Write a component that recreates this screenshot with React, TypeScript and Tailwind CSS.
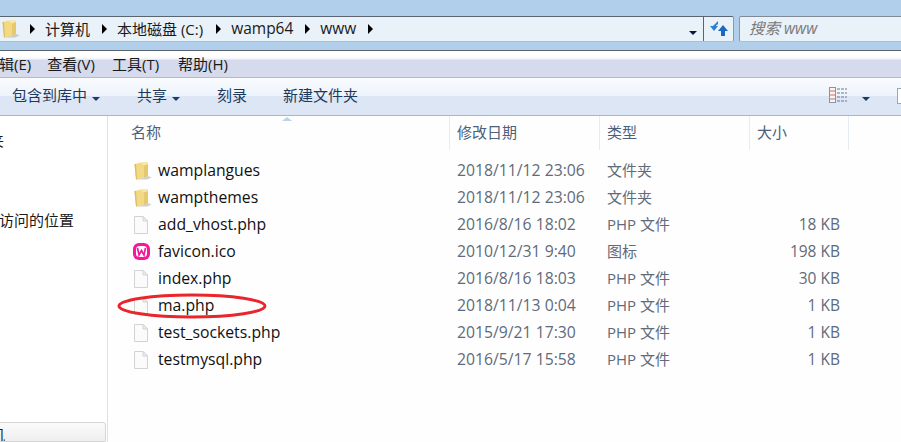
const cjk = "font-['Open_Sans','Noto_Sans_CJK_SC',sans-serif]";

const files = [
  { name: "wamplangues", date: "2018/11/12 23:06", type: "文件夹", size: "", icon: "folder" },
  { name: "wampthemes", date: "2018/11/12 23:06", type: "文件夹", size: "", icon: "folder" },
  { name: "add_vhost.php", date: "2016/8/16 18:02", type: "PHP 文件", size: "18 KB", icon: "file" },
  { name: "favicon.ico", date: "2010/12/31 9:40", type: "图标", size: "198 KB", icon: "wamp" },
  { name: "index.php", date: "2016/8/16 18:03", type: "PHP 文件", size: "30 KB", icon: "file" },
  { name: "ma.php", date: "2018/11/13 0:04", type: "PHP 文件", size: "1 KB", icon: "file" },
  { name: "test_sockets.php", date: "2015/9/21 17:30", type: "PHP 文件", size: "1 KB", icon: "file" },
  { name: "testmysql.php", date: "2016/5/17 15:58", type: "PHP 文件", size: "1 KB", icon: "file" },
];

function FolderIcon({ className = "" }: { className?: string }) {
  return (
    <svg width="20" height="20" viewBox="0 0 20 20" className={className}>
      <path d="M4 2 L10 1 H15 V15 H4 Z" fill="#f6e9ae" />
      <path d="M1.5 3 L8 2 L11 4.5 V17 L3 18.5 Z" fill="#f2da84" />
      <path d="M1.5 3 L3 18.5 L4 18.3 L3 3 Z" fill="#dcbb5e" />
      <path d="M11 4.5 L15 3 V15 L11 17 Z" fill="#e6c96c" />
      <path d="M3 18.5 L11 17 L15 15 L18.5 16.5 L14 18.5 Z" fill="#b5b5b5" opacity="0.65" />
    </svg>
  );
}

function FileIcon() {
  return (
    <svg width="18" height="20" viewBox="0 0 18 20">
      <path d="M2.5 1.5 H11 L15.5 6 V18.5 H2.5 Z" fill="#fbfbfb" stroke="#d3d3d3" />
      <path d="M11 1.5 V6 H15.5 Z" fill="#eeeeee" stroke="#d3d3d3" />
    </svg>
  );
}

function WampIcon() {
  return (
    <svg width="19" height="19" viewBox="0 0 19 19">
      <rect x="1" y="1" width="17" height="17" rx="6" fill="#f5189b" />
      <rect x="4" y="4" width="11" height="11" rx="3.5" fill="#ffffff" />
      <path d="M5.5 6 L7 13 L9.5 8.5 L12 13 L13.5 6" fill="none" stroke="#f5189b" strokeWidth="1.7" />
    </svg>
  );
}

function Caret({ color = "#1f3a68" }: { color?: string }) {
  return <span className="inline-block h-0 w-0 border-x-[4px] border-t-[4px] border-x-transparent" style={{ borderTopColor: color }} />;
}

function Crumb({ className = "" }: { className?: string }) {
  return <span className={`inline-block h-0 w-0 border-y-[5px] border-l-[5px] border-y-transparent border-l-black ${className}`} />;
}

export default function App() {
  return (
    <div className={`flex h-[442px] w-[901px] flex-col overflow-hidden bg-white text-[15px] ${cjk}`}>
      {/* window chrome */}
      <div className="h-4 bg-[#b1cfeb]" />
      <div className="flex h-[26px] bg-[#b1cfeb]">
        <div className="flex flex-1 items-center rounded-r-[2px] border-y border-r border-t-[#5a6470] border-r-[#8f98a3] border-b-[#b4bcc4] bg-[#e9f1f9] text-[#1a1a1a]">
          <FolderIcon className="ml-[1px]" />
          <div className="flex items-center whitespace-nowrap">
            <Crumb className="ml-[9px]" />
            <span className="ml-[10px]">计算机</span>
            <Crumb className="ml-[12px]" />
            <span className="ml-[10px]">本地磁盘 (C:)</span>
            <Crumb className="ml-[13px]" />
            <span className="ml-[10px] text-[15.5px]">wamp64</span>
            <Crumb className="ml-[12px]" />
            <span className="ml-[10px] text-[15.5px]">www</span>
            <Crumb className="ml-[12px]" />
          </div>
          <div className="ml-auto mr-[6px]"><Caret color="#0a1440" /></div>
          <div className="flex h-full w-[30px] items-center justify-center border-l border-[#5a6470]">
            <svg width="20" height="18" viewBox="0 0 20 18">
              <path d="M9 1 L4 6 H1 L5 11 L9 6 H7 C7 5 8 4.5 9 4.5 Z" fill="#2f7fd0" />
              <path d="M14 5 L19 11 H16 V16 H12 V11 H9 Z" fill="#1c69be" />
            </svg>
          </div>
        </div>
        <div className="ml-[5px] flex w-[162px] items-center rounded-l-[2px] border-y border-l border-t-[#7f8a96] border-l-[#8f98a3] border-b-[#b4bcc4] bg-[#e9f1f9] pl-[9px] text-[15.5px] italic text-[#7a7a7a]">
          搜索 www
        </div>
      </div>
      <div className="h-2 bg-[#b1cfeb]" />

      {/* menu bar */}
      <div className="flex h-[27px] items-center border-t border-[#5a6470] bg-gradient-to-b from-white from-20% via-[#f4f6fb] via-30% to-[#d5daec] to-35% text-[15px] text-[#1a1a1a]">
        <span className="-ml-[16px] whitespace-nowrap">编辑(E)</span>
        <span className="ml-[16px]">查看(V)</span>
        <span className="ml-[17px]">工具(T)</span>
        <span className="ml-[19px]">帮助(H)</span>
      </div>

      {/* toolbar */}
      <div className="flex h-[39px] items-center border-y border-t-[#b3b9d3] border-b-[#a9b4cd] bg-gradient-to-b from-[#fafcfe] from-0% via-[#ecf3fb] via-50% to-[#dce6f4] to-50% pb-[2px] text-[15px] text-[#1e395b]">
        <span className="ml-3">包含到库中</span>
        <span className="ml-[5px]"><Caret /></span>
        <span className="ml-[37px]">共享</span>
        <span className="ml-[5px]"><Caret /></span>
        <span className="ml-[37px]">刻录</span>
        <span className="ml-[36px]">新建文件夹</span>
        <div className="ml-auto flex items-center">
          <svg width="19" height="17" viewBox="0 0 19 17">
            <rect x="0.5" y="0.5" width="6" height="15" fill="#f4f6fa" stroke="#8a94a6" />
            <path d="M1 4 H6 M1 8 H6 M1 12 H6" stroke="#d96a5a" />
            <path d="M8 2 H18 M8 6 H18 M8 10 H18 M8 14 H18" stroke="#6d7889" strokeDasharray="3 1" />
          </svg>
        </div>
        <span className="ml-[14px] mr-[27px]"><Caret /></span>
        <div className="-mr-[8px] h-[16px] w-[12px] border border-[#9aa5b5] bg-white" />
      </div>

      {/* content */}
      <div className="flex min-h-0 flex-1">
        <aside className="flex w-[108px] shrink-0 flex-col overflow-hidden border-r border-[#d9e2ee] text-[15px] text-[#1a1a1a]">
          <div className="mt-[13px] -ml-[11px] h-[20px]">夹</div>
          <div className="mt-[60px] -ml-[1px] h-[22px] whitespace-nowrap">访问的位置</div>
          <div className="mt-auto ml-[-4px] flex h-[20px] w-[110px] items-start overflow-hidden rounded-tr-[3px] border border-[#d5d5d5] bg-gradient-to-b from-[#fbfbfb] to-[#eeeeee]">
            <span className="-ml-[7px] mt-[1px]">机</span>
          </div>
        </aside>

        <main className="relative min-w-0 flex-1 bg-[#fefefe]">
          <svg width="12" height="6" viewBox="0 0 12 6" className="absolute left-[173px] top-0">
            <path d="M6 1 L11 5 H1 Z" fill="#bcd3e8" />
          </svg>
          {/* column headers */}
          <div className="flex h-[34px] text-[15px] text-[#4c607a]">
            <div className="w-[341px] pl-[23px] pt-[5px]">名称</div>
            <div className="w-[150px] border-l border-[#e6ecf3] pl-[7px] pt-[5px]">修改日期</div>
            <div className="w-[150px] border-l border-[#e6ecf3] pl-[7px] pt-[5px]">类型</div>
            <div className="w-[100px] border-x border-[#e6ecf3] pl-[7px] pt-[5px]">大小</div>
          </div>
          {/* file rows */}
          <div className="mt-[7px] flex flex-col">
            {files.map((f) => (
              <div key={f.name} className="flex h-[27px] items-center">
                <div className="flex w-[342px] items-center pl-[24px]">
                  <span className="flex w-[26px] shrink-0">
                    {f.icon === "folder" && <FolderIcon className="ml-[1px]" />}
                    {f.icon === "file" && <FileIcon />}
                    {f.icon === "wamp" && <WampIcon />}
                  </span>
                  <span className="text-[15.75px] text-[#111]">{f.name}</span>
                </div>
                <div className="w-[150px] pl-[7px] text-[15.75px] text-[#5f6b7a]">{f.date}</div>
                <div className="w-[150px] pl-[7px] text-[#5f6b7a]">{f.type}</div>
                <div className="w-[90px] text-right text-[15.5px] text-[#5f6b7a]">{f.size}</div>
              </div>
            ))}
          </div>
          {/* hand-drawn highlight */}
          <svg width="152" height="28" viewBox="0 0 152 28" className="absolute left-[9px] top-[176px]">
            <ellipse cx="75" cy="14" rx="73" ry="11" fill="none" stroke="#e8262c" strokeWidth="3" />
          </svg>
        </main>
      </div>
    </div>
  );
}
